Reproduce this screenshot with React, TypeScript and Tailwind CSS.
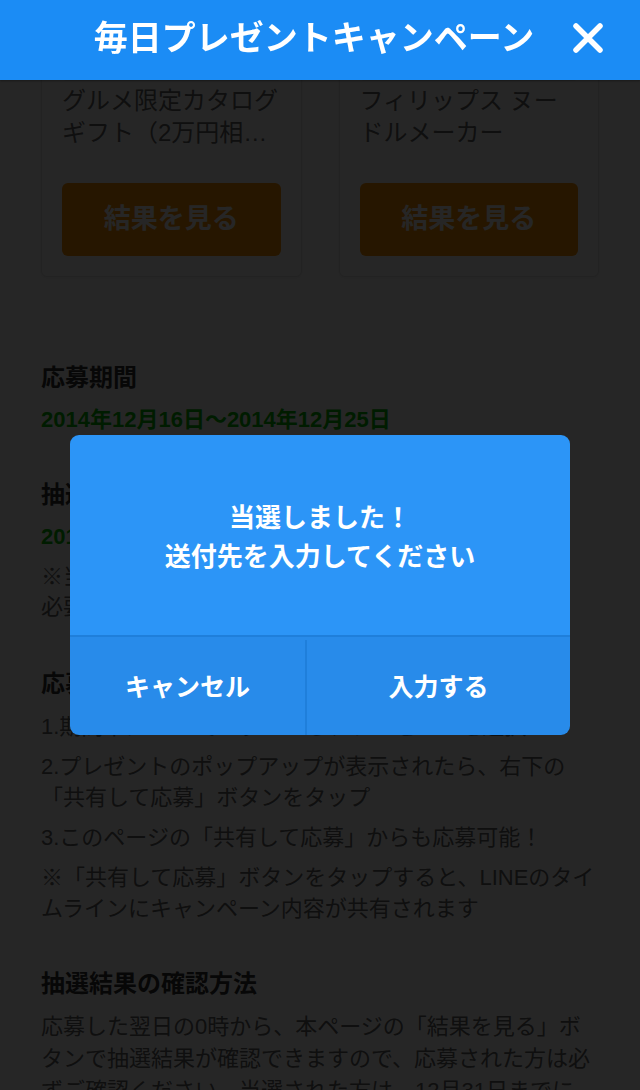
import { useState } from "react";

const FONT = "font-['Liberation_Sans','Noto_Sans_CJK_JP',sans-serif]";

// titles come pre-truncated from the prize list
const PRIZES = [
  { id: "gourmet", title: "グルメ限定カタログギフト（2万円相…" },
  { id: "noodle", title: "フィリップス ヌードルメーカー" },
];

function CloseIcon() {
  return (
    <svg width="32" height="32" viewBox="0 0 32 32" fill="none">
      <path
        d="M4 4L28 28M28 4L4 28"
        stroke="white"
        strokeWidth="5.5"
        strokeLinecap="round"
      />
    </svg>
  );
}

function PrizeCard({ title }: { title: string }) {
  return (
    <div className="rounded-[6px] border border-[#e2e2e2] bg-white p-[20px] shadow-[0_1px_3px_rgba(0,0,0,0.08)]">
      <div className="aspect-square w-full rounded-[4px] bg-[#f1f1f1]" />
      <p className="mt-[4px] line-clamp-2 h-[64px] text-[24px] leading-[32px] text-[#666]">
        {title}
      </p>
      <button className="mt-[34px] flex h-[73px] w-full items-center justify-center rounded-[6px] bg-[#fc9200] text-[27px] font-bold text-white">
        結果を見る
      </button>
    </div>
  );
}

function Section({
  title,
  children,
  className = "",
}: {
  title: string;
  children: React.ReactNode;
  className?: string;
}) {
  return (
    <section className={className}>
      <h2 className="text-[24px] font-bold leading-[32px] text-[#333]">{title}</h2>
      <div className="mt-[11px]">{children}</div>
    </section>
  );
}

export default function App() {
  const [dialogOpen, setDialogOpen] = useState(true);

  return (
    <div className={`relative min-h-screen overflow-hidden bg-white ${FONT}`}>
      <header className="fixed inset-x-0 top-0 z-20 flex h-[80px] items-center justify-center bg-[#1b8cf5] pb-[4px] shadow-[0_1px_2px_rgba(0,0,0,0.35)]">
        <h1 className="pr-[12px] text-[34px] font-bold leading-none text-white">
          毎日プレゼントキャンペーン
        </h1>
        <button className="absolute right-[36px] top-[22px]" aria-label="閉じる">
          <CloseIcon />
        </button>
      </header>

      {/* scrolled page content */}
      <main className="-mt-[159px] px-[41px] pb-[40px]">
        <div className="grid grid-cols-2 gap-[37px]">
          {PRIZES.map((p) => (
            <PrizeCard key={p.id} title={p.title} />
          ))}
        </div>

        <Section title="応募期間" className="mt-[85px]">
          <p className="text-[22px] font-bold leading-[30px] text-[#00b900]">
            2014年12月16日〜2014年12月25日
          </p>
        </Section>

        <Section title="抽選日" className="mt-[44px]">
          <p className="text-[22px] font-bold leading-[30px] text-[#00b900]">
            2014年12月17日〜2014年12月26日
          </p>
          <p className="mt-[10px] whitespace-nowrap text-[22px] leading-[30px] text-[#666]">
            ※当選者は、抽選日の翌日以降に「結果を見る」から
            <br />
            必要事項をご入力ください
          </p>
        </Section>

        <Section title="応募方法" className="mt-[46px]">
          <div className="flex flex-col gap-[9px] whitespace-nowrap text-[22px] leading-[31px] text-[#666]">
            <p>1.期間中にLINEでログインし、プレゼントを選択</p>
            <p>
              2.プレゼントのポップアップが表示されたら、右下の
              <br />
              「共有して応募」ボタンをタップ
            </p>
            <p>3.このページの「共有して応募」からも応募可能！</p>
            <p>
              ※「共有して応募」ボタンをタップすると、LINEのタイ
              <br />
              ムラインにキャンペーン内容が共有されます
            </p>
          </div>
        </Section>

        <Section title="抽選結果の確認方法" className="mt-[44px]">
          <p className="mt-[2px] whitespace-nowrap text-[22px] leading-[32px] text-[#666]">
            応募した翌日の0時から、本ページの「結果を見る」ボ
            <br />
            タンで抽選結果が確認できますので、応募された方は必
            <br />
            ずご確認ください。当選された方は、12月31日までに
            <br />
            送付先をご入力ください。
          </p>
        </Section>
      </main>

      {dialogOpen && (
        <div className="fixed inset-x-0 bottom-0 top-[80px] z-10 flex items-center justify-center bg-black/85">
          <div className="w-[500px] overflow-hidden rounded-[9px]">
            <div className="flex h-[200px] flex-col items-center justify-center bg-[#2c95f7] pt-[5px] text-[26px] font-semibold leading-[39px] text-white">
              <p>当選しました！</p>
              <p>送付先を入力してください</p>
            </div>
            <div className="grid h-[100px] grid-cols-[237px_1fr] border-t-2 border-[#1f7fdb] bg-[#288bea] pt-[3px] text-[25px] font-bold text-white">
              <button
                className="border-r-2 border-[#1f7fdb]"
                onClick={() => setDialogOpen(false)}
              >
                キャンセル
              </button>
              <button onClick={() => setDialogOpen(false)}>入力する</button>
            </div>
          </div>
        </div>
      )}
    </div>
  );
}
